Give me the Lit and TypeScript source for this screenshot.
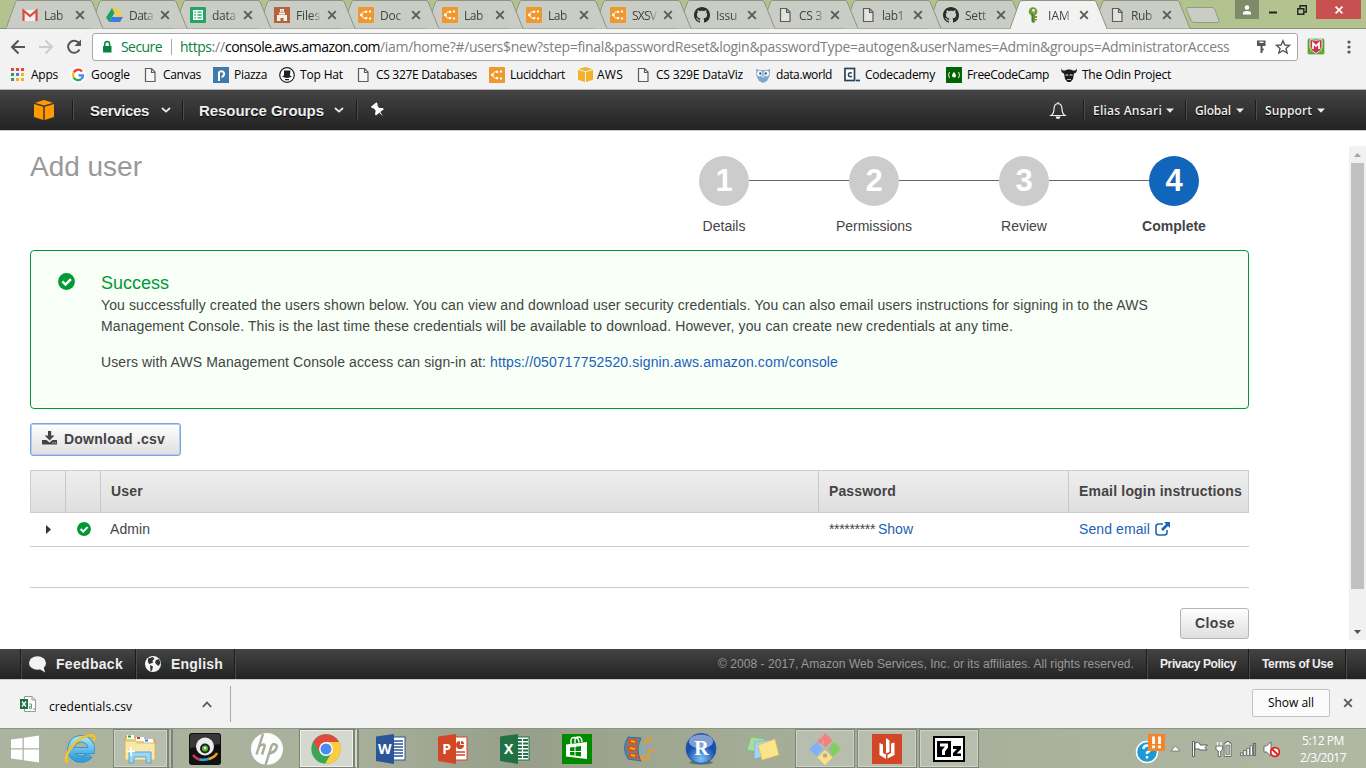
import { LitElement, html, svg, css } from "lit";
import { customElement, property } from "lit/decorators.js";

/** Text whose letter spacing is spread so that it fills a given width. */
@customElement("fit-text")
class FitText extends LitElement {
  @property({ type: Number }) w = 0;
  @property() text = "";
  static styles = css`
    :host { display: inline-block; white-space: pre; flex: none; }
    .inner { display: inline-block; }
  `;
  firstUpdated() {
    const el = this.renderRoot.querySelector(".inner") as HTMLElement;
    const natural = el.getBoundingClientRect().width;
    if (this.w && this.text.length) {
      el.style.letterSpacing = (this.w - natural) / this.text.length + "px";
      this.style.width = this.w + "px";
    }
  }
  render() {
    return html`<span class="inner">${this.text}</span>`;
  }
}

const fit = (text: string, w: number, cls = "") =>
  html`<fit-text class=${cls} .text=${text} .w=${w}></fit-text>`;

const icon = (w: number, h: number, body: unknown, vb = `0 0 ${w} ${h}`) =>
  html`<svg class="ic" width=${w} height=${h} viewBox=${vb}>${body}</svg>`;

const page = () => icon(16, 16, svg`<path d="M3.5 1.5h6l3.500 3.500v9.500h-9.500zM9.500 1.500v4h3.500" fill="#fafafa" fill-opacity=".5" stroke="#5c5c5c" stroke-width="1.200"/>`);
const lucid = () => icon(16, 16, svg`<rect width="16" height="16" rx="1" fill="#f0982c"/><path d="M7.500 4.800H5.500L3.500 8l2 3.200h2" fill="none" stroke="#fff" stroke-width=".9"/><circle cx="3.300" cy="8" r="1.400" fill="#fff"/><path d="M7 3.700h2.200v2.200H7zM7 10h2.200v2.200H7zM11 3.500h2v2h-2zM11 10.500h2v2h-2z" fill="#fff"/>`);
const github = () => icon(16, 16, svg`<path fill="#2c2e2b" d="M8 0C3.580 0 0 3.580 0 8c0 3.540 2.290 6.530 5.470 7.590.4.070.55-.17.55-.38 0-.19-.01-.82-.01-1.490-2.010.37-2.530-.49-2.690-.94-.09-.23-.48-.94-.82-1.130-.28-.15-.68-.52-.01-.53.63-.01 1.080.58 1.230.82.72 1.210 1.870.87 2.330.66.07-.52.28-.87.51-1.070-1.780-.2-3.640-.89-3.640-3.950 0-.87.31-1.590.82-2.150-.08-.2-.36-1.020.08-2.120 0 0 .67-.21 2.200.82.64-.18 1.320-.27 2-.27s1.360.09 2 .27c1.530-1.040 2.200-.82 2.200-.82.44 1.100.16 1.920.08 2.120.51.56.82 1.270.82 2.150 0 3.070-1.870 3.750-3.650 3.950.29.25.54.73.54 1.480 0 1.070-.01 1.930-.01 2.200 0 .21.15.46.55.38A8.010 8.010 0 0 0 16 8c0-4.420-3.580-8-8-8z"/>`);
const gmail = () => icon(16, 16, svg`<path d="M1 3h14v11H1z" fill="#efefef"/><path d="M1.500 14V3.500L8 9l6.500-5.500V14" fill="none" stroke="#d9493c" stroke-width="2.200"/>`);
const drive = () => icon(17, 16, svg`<path d="M6 1h5l6 9h-5.500z" fill="#f7cb3f"/><path d="M6 1 0 10.500 3 15l5.500-9z" fill="#1da261"/><path d="M3 15h11l3-5H6z" fill="#3e7be0"/>`);
const sheets = () => icon(16, 16, svg`<rect width="16" height="16" rx="1" fill="#23a566"/><path d="M3.700 3.700h8.600v8.600H3.700zM3.700 6.500h8.600M3.700 9.500h8.600M6.700 3.700v8.600" fill="none" stroke="#fff" stroke-width="1.400"/>`);
const files = () => icon(16, 16, svg`<rect width="16" height="16" fill="#b5623d"/><path d="M6 2h4v3H6zM5 5.500h6v2H5zM3 8h10v6h-3.500v-3h-3v3H3z" fill="#f8efe9"/><path d="M7.500 3h1v1.500h-1z" fill="#b5623d"/>`);
const iamKey = () => icon(16, 16, svg`<circle cx="7" cy="4.500" r="4.300" fill="#719b37"/><path d="M5.500 7h3.500v8l-2 1-1.500-1.500z" fill="#4f7528"/><path d="M9 9h2v2H9zM9 12h2v1.500H9z" fill="#719b37"/><circle cx="7.500" cy="3.500" r="1.400" fill="#eef3e2"/><path d="M8 4v12" stroke="#9cc060" stroke-width=".8"/>`);
const cube = (s: number, c = "#f90") => icon(s, s, svg`<path d="M10 0l9 2.700-9 2.800-9-2.800z" fill=${c}/><path d="M0 4l9.300 2.800V20L0 17z" fill=${c}/><path d="M20 4l-9.300 2.800V20L20 17z" fill=${c}/>`, "0 0 20 20");
const check = (s: number) => icon(s, s, svg`<circle cx="8.500" cy="8.500" r="8.400" fill="#093"/><path d="M4.300 8.400l3.200 3.200 5.400-5.400" fill="none" stroke="#fff" stroke-width="2.500"/>`, "0 0 17 17");
const cross = () => icon(10, 10, svg`<path d="M1.200 1.200l7.600 7.600M8.800 1.200L1.200 8.800" stroke="#5a5d57" stroke-width="1.900"/>`);
const caret = () => icon(8, 5, svg`<path d="M0 .5h8L4 4.700z" fill="#eee"/>`);
const chevron = () => icon(10, 6, svg`<path d="M1 1L5 4.600 9 1" fill="none" stroke="#eee" stroke-width="1.700"/>`);

// visible label, its width, icon
const TABS: [string, number, () => unknown][] = [
  ["Lab", 19, gmail], ["Data", 24, drive], ["data", 24, sheets], ["Files", 24, files], ["Doc", 21, lucid],
  ["Lab", 19, lucid], ["Lab", 19, lucid], ["SXSV", 24, lucid], ["Issu", 21, github], ["CS 3", 23, page],
  ["lab1", 22, page], ["Sett", 21, github], ["IAM", 22, iamKey], ["Rub", 21, page],
];

const google = () => icon(16, 16, svg`<circle cx="8" cy="8" r="8" fill="#fff"/><g fill="none" stroke-width="2.300"><path d="M12 4.500A5 5 0 0 0 3.700 5.500" stroke="#ea4335"/><path d="M3.700 5.500a5 5 0 0 0 0 5" stroke="#fbbc05"/><path d="M3.700 10.500A5 5 0 0 0 11.300 12" stroke="#34a853"/><path d="M11.300 12A5 5 0 0 0 13 8.300H8.500" stroke="#4285f4"/></g>`);
const piazza = () => icon(16, 16, svg`<rect width="16" height="16" fill="#3e7aab"/><path d="M6 14V5.500a2.800 2.800 0 1 1 2.500 4.300" fill="none" stroke="#fff" stroke-width="2"/>`);
const topHat = () => icon(16, 16, svg`<circle cx="8" cy="8" r="7.300" fill="#fff" stroke="#222" stroke-width="1.200"/><path d="M5 3.500h6.500l-.7 5 2 .8c-2 2.200-7.600 2.200-9.600 0L5 8.500zM6 12h4v1.300H6z" fill="#222"/>`);
const owl = () => icon(16, 16, svg`<path d="M1 2l3 1h8l3-1-.5 7L12 14l-4 2-4-2-2.500-5z" fill="#7ba6cf"/><circle cx="4.700" cy="6.500" r="3.200" fill="#fff" stroke="#7ba6cf" stroke-width=".8"/><circle cx="11.300" cy="6.500" r="3.200" fill="#fff" stroke="#7ba6cf" stroke-width=".8"/><circle cx="5.300" cy="6.500" r="1.200" fill="#3b5c7e"/><circle cx="10.700" cy="6.500" r="1.200" fill="#3b5c7e"/><path d="M7 9h2l-1 2z" fill="#fff"/>`);
const codec = () => icon(16, 16, svg`<rect x="1" y="1.500" width="9.500" height="12" fill="#fff" stroke="#24435b" stroke-width="1.700"/><path d="M7.800 6.300a2 2 0 1 0 0 2.800" fill="none" stroke="#24435b" stroke-width="1.500"/><path d="M12 13.500h4" stroke="#24435b" stroke-width="1.700"/>`);
const fcc = () => icon(16, 16, svg`<rect width="16" height="16" fill="#006400"/><path d="M3.500 5Q1.500 8 3.500 11M12.500 5Q14.500 8 12.500 11" fill="none" stroke="#fff" stroke-width=".9"/><path d="M8 4.500c.2 1.500 2 2.500 2 4 0 1.200-1 2-2 2s-2-.8-2-2C6 7 7.500 6 8 4.500z" fill="#fff"/>`);
const odin = () => icon(16, 16, svg`<path d="M0 1c.5 2.500 2 2.500 4 2.500 2-1.500 6-1.500 8 0 2 0 3.500 0 4-2.500.2 3.500-1 5-3 5.500L12 12l-2.500 3h-3L4 12l-1-5.500C1 6 0 4.500 0 1z" fill="#1b1b1b"/><path d="M4.500 7.500h2.800v1H4.500zM8.700 7.500h2.800v1H8.700zM6 12h4v.8H6z" fill="#f2f2f2"/>`);
const apps = () => icon(14, 14, svg`${["#e0483e", "#e0483e", "#e0483e", "#2f9e57", "#3f7de0", "#f0b31c", "#2f9e57", "#f0b31c", "#f0b31c"].map((c, i) => svg`<rect x=${(i % 3) * 5} y=${Math.floor(i / 3) * 5} width="3" height="3" fill=${c}/>`)}`);

// icon, label, icon start, label start, label width
const MARKS: [() => unknown, string, number, number, number][] = [
  [apps, "Apps", 11, 31, 27], [google, "Google", 70, 91, 39], [page, "Canvas", 142, 163, 38],
  [piazza, "Piazza", 213, 234, 33], [topHat, "Top Hat", 279, 300, 43],
  [page, "CS 327E Databases", 355, 376, 101], [lucid, "Lucidchart", 489, 510, 55],
  [() => cube(15, "#f2b127"), "AWS", 578, 598, 26], [page, "CS 329E DataViz", 636, 657, 87],
  [owl, "data.world", 756, 777, 56], [codec, "Codecademy", 845, 866, 70],
  [fcc, "FreeCodeCamp", 947, 968, 82], [odin, "The Odin Project", 1062, 1083, 89],
];

const office = (c: string, letter: string, sheet: unknown) => icon(32, 32, svg`<rect x="16" y="4" width="14" height="23" fill="#fff" stroke=${c}/>${sheet}<path d="M1 3.500L19 1v30L1 28z" fill=${c}/><text x="9.700" y="21" text-anchor="middle" class="glyph">${letter}</text>`);

const winLogo = () => icon(28, 28, svg`<path d="M0 4.500L11.500 3v10.300H0zM12.800 2.800L28 .5v12.800H12.800zM0 14.600h11.500V25L0 23.500zM12.800 14.600H28v12.900l-15.200-2.300z" fill="#fff"/>`);
const ie = () => icon(34, 32, svg`<defs><linearGradient id="ieg" x2="0" y2="1"><stop stop-color="#9de1fb"/><stop offset="1" stop-color="#2b9fe0"/></linearGradient></defs><path d="M25.500 22A10.300 10.300 0 1 1 27.300 17.500H10" fill="none" stroke="#2e86bf" stroke-width="7"/><path d="M25.500 22A10.300 10.300 0 1 1 27.300 17.500H10" fill="none" stroke="url(#ieg)" stroke-width="5.600"/><path d="M3.500 30C-1.500 25 8 9 20 4c9-3.500 12-1.500 9.500 4" fill="none" stroke="#f3c524" stroke-width="2.600"/>`);
const explorer = () => icon(32, 32, svg`<path d="M1 4h10l2 3h18v20H1z" fill="#e9cf7e" stroke="#c4a24e"/><path d="M3 2h7v4H3zM12 4h8v4h-8zM20 6h9v4h-9z" fill="#fff"/><path d="M4 2.500h3v2H4z" fill="#18a03a"/><path d="M13 4h3v2h-3z" fill="#d43a2a"/><path d="M21 6.500h3v2h-3z" fill="#2183d8"/><path d="M1 8h10l2 2h18v17H1z" fill="#f8e8ad" stroke="#d9bd6e"/><path d="M5 30V19h22v11h-5v-6H10v6z" fill="#9cd5f0" stroke="#58a6cf"/><path d="M7 14v9M3 18.500h8" stroke="#fff" stroke-width="1.500"/>`);
const cam = () => icon(32, 32, svg`<rect width="32" height="32" rx="3" fill="#111"/><path d="M1 3a2 2 0 0 1 2-2h26a2 2 0 0 1 2 2v8L1 15z" fill="#383838"/><circle cx="16" cy="13.500" r="9" fill="#ececec"/><circle cx="16" cy="15.500" r="5" fill="#222"/><circle cx="16" cy="15.500" r="3" fill="#56b83a"/><circle cx="16" cy="15" r="1.200" fill="#d8ffc8"/><path d="M4 22q3 4 8 5" fill="none" stroke="#c23a60" stroke-width="2.500"/><path d="M11 26.500q5 1 10-1" fill="none" stroke="#2ea5e4" stroke-width="2.500"/><path d="M20 26q6-2 8-6" fill="none" stroke="#f2a21c" stroke-width="2.500"/>`);
const hp = () => icon(32, 32, svg`<circle cx="16" cy="16" r="16" fill="#fdfdfd"/><path d="M12 1L5.500 21.500M8.500 13q6-3.500 5 1L11 21.500M21 11.500L14.500 32M21 11.500q6-1 4.500 3.500T18 20.500" fill="none" stroke="#a5ac99" stroke-width="2.400"/>`);
const chrome = () => icon(32, 32, svg`<circle cx="16" cy="16" r="14.700" fill="#3aa757"/><path d="M16 9h13A14.700 14.700 0 0 1 15 30.700L22 19z" fill="#fccd41"/><path d="M3.300 8.700L10 20l6-11h13A14.700 14.700 0 0 0 3.300 8.700z" fill="#dd4b3e"/><circle cx="16" cy="16" r="6.900" fill="#fff"/><circle cx="16" cy="16" r="5.500" fill="#4a8af4"/>`);
const word = () => office("#2a5699", "W", svg`<path d="M19 8h9M19 11h9M19 14h9M19 17h9M19 20h9M19 23h9" stroke="#2a5699" stroke-width="1.300"/>`);
const ppt = () => office("#d24726", "P", svg`<circle cx="23" cy="12" r="4" fill="#d24726"/><path d="M23 12V7h5v5z" fill="#fff"/><path d="M24 11V8a3 3 0 0 1 3 3z" fill="#d24726"/><path d="M19 19h9M19 22h9" stroke="#d24726" stroke-width="1.300"/>`);
const excel = () => office("#207245", "X", svg`<path d="M19 7h10M19 10.500h10M19 14h10M19 17.500h10M19 21h10M19 24h10" stroke="#207245" stroke-width="1.800"/><path d="M23.500 5v21" stroke="#fff" stroke-width="1.200"/>`);
const store = () => icon(30, 30, svg`<rect width="30" height="30" fill="#008a00"/><path d="M4 10.500L25 8v17L4 22.500z" fill="#fff"/><path d="M9 10V6.500Q9 3 13 3.500t4 5M13 9V6q0-3 3.500-3T20 8" fill="none" stroke="#fff" stroke-width="1.400"/><path d="M8 13.500l4.500-.5v4H8zM13.500 12.800l5.500-.8v5h-5.500zM8 18h4.500v3.500L8 21zM13.500 18H19v4.500l-5.500-.8z" fill="#008a00"/>`);
const movie = () => icon(32, 32, svg`<path d="M5 4q-7 11 0 22l13 2q-6-11 0-23z" fill="#4a87b8" stroke="#3a6d98"/><path d="M5.500 5.500l10 .5-1 5.500H4.500zM4 12.500h10v6H4zM4.500 20h10.500l1 6-10-1z" fill="#d45a17"/><path d="M8 8l4 1M7 15l5 1M8 22l4 1" stroke="#f7b733" stroke-width="1.700"/><path d="M29 5c-5 0-8 5-7 10s-4 6-4 9 6 4 7 0-1-8 6-6" fill="none" stroke="#e59b36" stroke-width="2.200"/><path d="M20 22V14h5" fill="none" stroke="#6fb0dc" stroke-width="3"/>`);
const rstudio = () => icon(32, 32, svg`<defs><radialGradient id="rg" cy=".85"><stop stop-color="#7dc3f8"/><stop offset="1" stop-color="#164fae"/></radialGradient></defs><ellipse cx="16" cy="29.500" rx="12" ry="2" fill="#6c7262"/><circle cx="16" cy="15.500" r="15" fill="url(#rg)" stroke="#2858a8"/><ellipse cx="16" cy="8.500" rx="12" ry="7" fill="#fff" fill-opacity=".45"/><text x="16.500" y="22" text-anchor="middle" class="serif">R</text>`);
const notes = () => icon(32, 32, svg`<path d="M4 4l14 2-3 14L0 17z" fill="#a8dc9a" stroke="#7bbb70" stroke-width=".6"/><path d="M8 9l14-2 2 15-17 4z" fill="#a4d3f4" stroke="#6fabd6" stroke-width=".6"/><path d="M11 12l17-6 4 16-17 5z" fill="#fbe58b" stroke="#dcbb4a" stroke-width=".7"/>`);
const git = () => icon(32, 32, svg`<path d="M16 0l7.500 7.500-7 7-3-3 2-2.500-3.500-3.500z" fill="#f48080"/><path d="M11 5l3.500 3.500-3 3L8 8z" fill="#f48080"/><path d="M7.500 9l6.500 7-6.500 7.500L0 16z" fill="#80b0fa"/><path d="M24.500 8.500L32 16l-7.500 7.500-3-3-2-5 2-3z" fill="#80d060"/><path d="M16 17l7.500 7.500L16 32l-7.500-7.500z" fill="#ffe080"/><circle cx="16" cy="22.500" r="2.300" fill="#a9af9c"/><circle cx="21" cy="16.500" r="1.900" fill="#a9af9c"/>`);
const uoffice = () => icon(30, 30, svg`<rect width="30" height="30" fill="#d24726"/><path d="M7.500 9l3.500 1.500V19l3 1.500V25l-6.500-4zM14 4l3.500 2.500V18L14 19.500zM19 9.500l3.500-1V21L15.500 24.500v-3.500l3.500-2z" fill="#fff"/>`);
const seven = () => icon(32, 26, svg`<rect x="1" y="1" width="30" height="24" fill="#fff" stroke="#000" stroke-width="2"/><path d="M4 5h14v16H4z"/><path d="M7 7.500h8v4l-3 4v3.500H9v-5l3-3.500H7z" fill="#fff"/><path d="M20 10h8v3l-4.500 4.500H28V20h-8v-3l4-4h-4z"/>`);

const TASKS: [() => unknown, string][] = [
  [ie, ""], [explorer, "open stacked dim"], [cam, ""], [hp, ""], [chrome, "open stacked"], [word, ""], [ppt, ""],
  [excel, ""], [store, ""], [movie, ""], [rstudio, ""], [notes, ""], [git, "open dim"], [uoffice, "open dim"], [seven, "open dim"],
];

@customElement("app-root")
class AppRoot extends LitElement {
  static styles = css`
    :host { display: flex; flex-direction: column; width: 1366px; height: 768px; overflow: hidden; background: #fff; font: 12px "Open Sans", "Noto Sans", sans-serif; color: #000; }
    * { box-sizing: border-box; }
    .ic { display: block; flex: none; overflow: visible; }
    .row { display: flex; align-items: center; }
    .grow { flex: 1; }

    .strip { height: 29px; flex: none; display: flex; background: #b3c390; border-bottom: 1px solid #878f76; padding-left: 6px; }
    .tab { position: relative; width: 84px; height: 29px; flex: none; display: flex; align-items: center; padding: 1px 0 0 16px; }
    .tab.slim { width: 83px; }
    .shape { position: absolute; left: 0; top: 0; }
    .tab .ic { position: relative; }
    .label { position: relative; width: 25px; flex: none; margin: 0 6px 0 6px; color: #42443f; -webkit-mask-image: linear-gradient(90deg, #000 65%, #0004 95%); mask-image: linear-gradient(90deg, #000 65%, #0004 95%); }
    .fill { fill: #cacdc5; stroke: #8f947f; }
    .active .fill { fill: #f2f2f2; }
    .newtab { padding: 7px 0 0 9px; width: 59px; flex: none; }
    .wins { display: flex; height: 19px; align-items: stretch; flex: none; }
    .person { width: 24px; background: #7f8a68; display: grid; place-items: center; }
    .min, .max { width: 28.500px; display: grid; place-items: center; }
    .shut { width: 45px; background: #c75050; display: grid; place-items: center; }

    .toolbar { height: 33px; flex: none; background: #f2f2f2; padding-left: 10px; }
    .navs { width: 82px; gap: 12px; }
    .omni { width: 1206px; height: 28px; margin-top: 3px; background: #fff; border: 1px solid #a8a8a8; border-radius: 3px; padding: 0 0 1px 9px; font-size: 14px; }
    .green { color: #0b8043; }
    .grey { color: #808080; }
    .bar { width: 1px; height: 16px; background: #aaa; margin: 0 8px 0 9px; }
    .marks { height: 28px; flex: none; background: #f2f2f2; border-bottom: 1px solid #b8b8b8; padding-bottom: 2px; }
    .mark { display: flex; align-items: center; }

    .aws { height: 41px; flex: none; background: linear-gradient(#444, #222); border-bottom: 1px solid #ccc; font: bold 15px "Liberation Sans", sans-serif; color: #eee; text-shadow: 0 1px 1px #000; }
    .sep { width: 2px; height: 20px; border-left: 1px solid #1b1b1b; border-right: 1px solid #4c4c4c; flex: none; }
    .sub { font: 600 12px "Open Sans", sans-serif; }

    .body { height: 518px; flex: none; display: flex; font: 14px "Liberation Sans", Arial, sans-serif; color: #444; }
    .main { width: 1219px; margin-left: 30px; }
    .top { height: 119px; display: flex; justify-content: space-between; }
    .title { font-size: 28px; line-height: 32px; color: #999; margin-top: 20px; }
    .steps { display: flex; margin: 25px 0 0; width: 600px; }
    .step { width: 150px; display: flex; flex-direction: column; align-items: center; }
    .railrow { display: flex; width: 150px; align-items: center; }
    .rail { flex: 1; height: 1px; background: #666; margin-bottom: 1px; }
    .rail.off { background: none; }
    .disc { width: 50px; height: 50px; border-radius: 50%; background: #ccc; color: #fff; font: bold 31px/50px "Liberation Sans", sans-serif; text-align: center; }
    .cur .disc { background: #1166bb; }
    .cur .name { font-weight: bold; }
    .name { margin-top: 11px; line-height: 18px; }
    .alert { height: 159px; border: 1px solid #093; border-radius: 4px; background: #f7fff7; display: flex; padding: 22px 0 0 27px; }
    .alert .copy { margin-left: 26px; line-height: 21px; }
    .head { font-size: 18px; color: #093; line-height: 20px; margin-bottom: 2px; }
    .line { height: 21px; display: flex; }
    .gap { height: 15px; }
    .link { color: #1c5fb8; }
    .btn { height: 31px; border: 1px solid #b5b5b5; border-radius: 3px; background: linear-gradient(#fff, #dedede); font-weight: bold; display: flex; align-items: center; padding-bottom: 2px; }
    .dl { width: 151px; height: 33px; margin-top: 14px; padding-left: 11px; border: 1px solid #7ea2e0; box-shadow: inset 0 0 0 1px #b3ccf5; }
    .dl fit-text { margin-left: 7px; }
    .dl .ic { margin-bottom: 2px; }
    .grid { display: grid; grid-template-columns: 35px 35px 718px 250px 181px; }
    .thead { height: 43px; margin-top: 14px; background: linear-gradient(#eee, #dfdfdf); border: 1px solid #ccc; font-weight: bold; }
    .thead div { border-left: 1px solid #c8c8c8; padding: 0 0 2px 10px; display: flex; align-items: center; }
    .thead div:first-child { border-left: 0; }
    .thead { grid-template-columns: 34px 35px 718px 250px 180px; }
    .tr { height: 34px; border-bottom: 1px solid #ccc; align-items: center; padding-bottom: 1px; }
    .tr .row { padding-left: 11px; }
    .tr .user { padding-left: 10px; }
    .empty { height: 41px; border-bottom: 1px solid #ccc; }
    .foot { display: flex; justify-content: flex-end; padding-top: 20px; }
    .close { width: 69px; padding-left: 14px; }
    .scroll { width: 17px; height: 494px; margin: 15px 0 0 100px; background: #f1f1f1; display: flex; flex-direction: column; align-items: center; }
    .thumb { width: 13px; height: 426px; background: #c1c1c1; }
    .arr { height: 17px; display: grid; place-items: center; }

    .footer { height: 31px; flex: none; background: linear-gradient(#444, #222); border-bottom: 1px solid #ccc; color: #eee; font: bold 14px "Liberation Sans", sans-serif; }
    .footer .sep { height: 30px; }
    .copyr { font-weight: normal; font-size: 12px; color: #999; }
    .small { font-size: 12px; }

    .shelf { height: 48px; flex: none; background: #f2f2f2; }
    .shelf .bar { height: 36px; margin: 0; }
    .file { margin-top: 4px; }
    .all { width: 78px; height: 28px; background: #fbfbfb; border: 1px solid #c2c2c2; border-radius: 2px; padding: 0 0 2px 15px; }
    .shelfend { margin-bottom: 2px; }

    .task { height: 40px; flex: none; background: linear-gradient(90deg, #acb39e, #a9b09c 25%, #979e89 38%, #a4ab96 55%, #abb29d 80%, #b0b7a2); border-top: 1px solid #8d947f; }
    .start { width: 50px; display: flex; justify-content: center; }
    .cell { width: 62px; height: 39px; display: flex; align-items: center; justify-content: center; }
    .frame { width: 60px; height: 39px; border: 1px solid #7e8474; box-shadow: inset 0 0 0 1px #ffffff90; background: #d5d8cf; display: flex; align-items: center; justify-content: center; }
    .dim .frame { background: #b8beae; box-shadow: inset 0 0 0 1px #ffffff50; }
    .stacked .frame { width: 60px; margin-right: 1px; border-right: 6px double #7e8474; }
    .glyph { font: bold 14px "Open Sans", sans-serif; fill: #fff; }
    .serif { font: bold 20px "Liberation Serif", serif; fill: #fff; }
    .clock { color: #fff; line-height: 17px; display: flex; flex-direction: column; align-items: center; width: 46px; margin-top: 1px; }
  `;

  tab([label, w, ic]: [string, number, () => unknown], i: number) {
    const active = label.startsWith("IAM");
    return html`<div class="tab ${active ? "active" : ""} ${i > 7 ? "slim" : ""}" style="z-index:${active ? 40 : 30 - i}">
      <svg class="shape" width="99" height="29"><path class="fill" d="M0 28.500L9.500 2Q10 .5 12 .5H84Q85.500.500 86.200 2L97 28.500" />${active ? svg`<path d="M1 28.500h95" stroke="#f2f2f2"/>` : ""}</svg>
      ${ic()}<div class="label">${fit(label, w)}</div>${cross()}
    </div>`;
  }

  marks() {
    let x = 0;
    return MARKS.map(([ic, label, ix, lx, w]) => {
      const lead = ix - x;
      const size = ic === apps ? 14 : 16;
      x = lx + w;
      return html`<div class="mark" style="padding-left:${lead}px;column-gap:${lx - ix - size}px">${ic()}${fit(label, w)}</div>`;
    });
  }

  step(n: number, name: string) {
    return html`<div class="step ${n === 4 ? "cur" : ""}">
      <div class="railrow"><div class="rail ${n === 1 ? "off" : ""}"></div><div class="disc">${n}</div><div class="rail ${n === 4 ? "off" : ""}"></div></div>
      <div class="name">${name}</div></div>`;
  }

  sp(w: number) {
    return html`<span style="flex:none;width:${w}px"></span>`;
  }

  render() {
    return html`
    <div class="strip">
      ${TABS.map((t, i) => this.tab(t, i))}
      <div class="newtab">${icon(34, 16, svg`<path d="M3 .5h24q2 0 3 2l4 11.500q.5 1.500-1.500 1.500H9q-2 0-2.800-2L1.500 2.500Q1 .5 3 .5z" fill="#cacdc5" stroke="#949a84"/>`)}</div>
      <div class="wins">
        <div class="person">${icon(10, 10, svg`<circle cx="5" cy="2.500" r="2.300" fill="#fff"/><path d="M1 9.500V8q0-2 4-2t4 2v1.500z" fill="#fff"/>`)}</div>
        <div class="min">${icon(8, 9, svg`<path d="M0 7.500h8" stroke="#222" stroke-width="2"/>`)}</div>
        <div class="max">${icon(10, 10, svg`<path d="M.8 3.800h6v5.500h-6zM3 3V.800h6.300V7H7" fill="none" stroke="#222" stroke-width="1.400"/>`)}</div>
        <div class="shut">${icon(8, 8, svg`<path d="M.6.6l6.800 6.800M7.400.6L.6 7.400" stroke="#fff" stroke-width="1.700"/>`)}</div>
      </div>
    </div>

    <div class="toolbar row">
      <div class="navs row">
        ${icon(16, 16, svg`<path d="M15 9H2.500M8.500 2.500L2 9l6.500 6.500" fill="none" stroke="#555" stroke-width="2"/>`)}
        ${icon(16, 16, svg`<path d="M1 9h12.500M7.500 2.500L14 9l-6.500 6.500" fill="none" stroke="#ccc" stroke-width="2"/>`)}
        ${icon(16, 16, svg`<path d="M13.500 11.500A6 6 0 1 1 12.800 5" fill="none" stroke="#555" stroke-width="2"/><path d="M15 1.500V8H8.500z" fill="#555"/>`)}
      </div>
      <div class="omni row">
        ${icon(10, 12, svg`<path d="M1 5h8.500v6.500H1z" fill="#0b8043"/><path d="M2.800 5V3a2.400 2.400 0 0 1 4.800 0v2" fill="none" stroke="#0b8043" stroke-width="1.500"/>`)}
        ${this.sp(9)}${fit("Secure", 41, "green")}
        <div class="bar"></div>
        ${fit("https", 31.5, "green")}${fit("://", 13.5, "grey")}${fit("console.aws.amazon.com", 155)}${fit("/iam/home?#/users$new?step=final&passwordReset&login&passwordType=autogen&userNames=Admin&groups=AdministratorAccess", 849.5, "grey")}
        ${this.sp(27)}
        ${icon(9, 13, svg`<path d="M0 .5h8.500v5.500H0z" fill="#555"/><path d="M2.500 2.300h4" stroke="#fff" stroke-width="1.400"/><path d="M4.500 5.500V13M4.500 9.500h2.200" fill="none" stroke="#555" stroke-width="2"/>`)}
        ${this.sp(10)}
        ${icon(14, 14, svg`<path d="M7 .8l1.900 4.200 4.600.4-3.500 3 1.100 4.600L7 10.500 2.900 13 4 8.400l-3.500-3L5.100 5z" fill="none" stroke="#555" stroke-width="1.400"/>`)}
      </div>
      ${this.sp(10)}
      ${icon(16, 16, svg`<rect y="1" width="16" height="15" rx="1" fill="#62b331" stroke="#3c8c2a" stroke-width=".6"/><path d="M2 1.500q6 1.500 12 0v7q0 4-6 7-6-3-6-7z" fill="#c8334d" stroke="#e8dfe0"/><path d="M5 11V5l3 3 3-3v6" fill="none" stroke="#fff" stroke-width="1.700"/>`)}
      ${this.sp(23)}
      ${icon(4, 14, svg`<circle cx="2" cy="3" r="1.600" fill="#555"/><circle cx="2" cy="8" r="1.600" fill="#555"/><circle cx="2" cy="13" r="1.600" fill="#555"/>`)}
    </div>
    <div class="marks row">${this.marks()}</div>

    <div class="aws row">
      ${this.sp(34)}${cube(20)}${this.sp(18)}<div class="sep"></div>${this.sp(16)}
      ${fit("Services", 59)}${this.sp(12)}${chevron()}${this.sp(11)}<div class="sep"></div>${this.sp(15)}
      ${fit("Resource Groups", 125)}${this.sp(10)}${chevron()}${this.sp(12)}<div class="sep"></div>${this.sp(13)}
      ${icon(14, 14, svg`<g transform="rotate(-38 7 7)"><path d="M3.500 0h7v2L9.300 3v3.200L12 8.500V10H2V8.500l2.700-2.300V3L3.500 2z" fill="#fff"/><path d="M6.300 10h1.400L7 15z" fill="#fff"/></g>`)}
      <div class="grow"></div>
      ${icon(16, 17, svg`<path d="M1 13.500q3-2 3-6.500 0-5 4-5.500 4 .5 4 5.500 0 4.500 3 6.500zM8 1.500V0" fill="none" stroke="#eee" stroke-width="1.200"/><path d="M5.500 14.500h5Q10 17 8 17t-2.500-2.500z" fill="#eee"/>`)}
      ${this.sp(17)}<div class="sep"></div>${this.sp(8)}
      ${fit("Elias Ansari", 69, "sub")}${this.sp(4)}${caret()}${this.sp(11)}<div class="sep"></div>${this.sp(8)}
      ${fit("Global", 36, "sub")}${this.sp(5)}${caret()}${this.sp(11)}<div class="sep"></div>${this.sp(8)}
      ${fit("Support", 47, "sub")}${this.sp(5)}${caret()}${this.sp(41)}
    </div>

    <div class="body">
      <div class="main">
        <div class="top">
          <div class="title">${fit("Add user", 112)}</div>
          <div class="steps">${["Details", "Permissions", "Review", "Complete"].map((s, i) => this.step(i + 1, s))}</div>
        </div>
        <div class="alert">${check(17)}
          <div class="copy">
            <div class="head">${fit("Success", 68)}</div>
            <div class="line">${fit("You successfully created the users shown below. You can view and download user security credentials. You can also email users instructions for signing in to the AWS", 1047)}</div>
            <div class="line">${fit("Management Console. This is the last time these credentials will be available to download. However, you can create new credentials at any time.", 912)}</div>
            <div class="gap"></div>
            <div class="line">${fit("Users with AWS Management Console access can sign-in at: ", 389)}${fit("https://050717752520.signin.aws.amazon.com/console", 348, "link")}</div>
          </div>
        </div>
        <div class="btn dl">${icon(15, 14, svg`<path d="M6 0h3.200v4.500h3.300L7.600 9.500 2.700 4.500H6z" fill="#444"/><path d="M0 9h4.500l3 2.500 3-2.500H15v4.500H0z" fill="#444"/><path d="M10.500 11.800h1M12.600 11.800h1" stroke="#eee"/>`)}${fit("Download .csv", 101)}</div>
        <div class="grid thead"><div></div><div></div><div>${fit("User", 32)}</div><div>${fit("Password", 67)}</div><div>${fit("Email login instructions", 163)}</div></div>
        <div class="grid tr">
          <div class="row">${this.sp(5)}${icon(5, 9, svg`<path d="M0 0v9l5-4.500z" fill="#333"/>`)}</div>
          <div class="row">${this.sp(1)}${check(14)}</div>
          <div class="row user">${fit("Admin", 40)}</div>
          <div class="row">${fit("*********", 46)}${this.sp(3)}${fit("Show", 35, "link")}</div>
          <div class="row">${fit("Send email", 71, "link")}${this.sp(5)}${icon(15, 14, svg`<path d="M8 2H3.500Q1 2 1 4.500v6Q1 13 3.500 13h6q2.500 0 2.500-2.500V8" fill="none" stroke="#1a66b8" stroke-width="1.600"/><path d="M9 0h6v6l-2-2-5 5-2-2 5-5z" fill="#1a66b8"/>`)}</div>
        </div>
        <div class="empty"></div>
        <div class="foot"><div class="btn close">${fit("Close", 40)}</div></div>
      </div>
      <div class="scroll">
        <div class="arr">${icon(7, 4, svg`<path d="M0 4h7L3.500 0z" fill="#a3a3a3"/>`)}</div>
        <div class="thumb"></div><div class="grow"></div>
        <div class="arr">${icon(7, 4, svg`<path d="M0 0h7L3.500 4z" fill="#505050"/>`)}</div>
      </div>
    </div>

    <div class="footer row">
      ${this.sp(20)}<div class="sep"></div>${this.sp(7)}
      ${icon(17, 17, svg`<ellipse cx="8.500" cy="7" rx="8.500" ry="6.800" fill="#f4f4f4"/><path d="M9 12l7 4.500-1.500-6z" fill="#f4f4f4"/>`)}
      ${this.sp(10)}${fit("Feedback", 67)}${this.sp(12)}<div class="sep"></div>${this.sp(8)}
      ${icon(16, 16, svg`<circle cx="8" cy="8" r="8" fill="#f4f4f4"/><path d="M3 2.500L8 1l1.500 2-2 1.500.5 2-2 1-2 .500-1-2zM11 4l3-1 1.500 4-2 3-2-1.500-1.500-2zM5 9l3 1.500-1 4-1.500.5z" fill="#333"/>`)}
      ${this.sp(10)}${fit("English", 52)}${this.sp(11)}<div class="sep"></div>
      <div class="grow"></div>
      ${fit("© 2008 - 2017, Amazon Web Services, Inc. or its affiliates. All rights reserved.", 416, "copyr")}${this.sp(12)}<div class="sep"></div>${this.sp(12)}
      ${fit("Privacy Policy", 76, "small")}${this.sp(12)}<div class="sep"></div>${this.sp(12)}
      ${fit("Terms of Use", 71, "small")}${this.sp(12)}<div class="sep"></div>${this.sp(19)}
    </div>

    <div class="shelf row">
      ${this.sp(20)}
      ${icon(16, 16, svg`<path d="M4.500.500h7.500l3.500 3.500v11.500h-11zM12 .5V4h3.500" fill="#fff" stroke="#999"/><path d="M0 3h8v10H0z" fill="#1f7244"/><path d="M2 5.500l4 5M6 5.500l-4 5" stroke="#fff" stroke-width="1.300"/><path d="M9 8h2.500v4.500H9.500v-2H11M14 12v2" stroke="#5fa37c" fill="none"/>`)}
      ${this.sp(13)}${fit("credentials.csv", 83, "file")}${this.sp(70)}
      ${icon(10, 7, svg`<path d="M.8 6L5 1.500 9.200 6" fill="none" stroke="#555" stroke-width="1.800"/>`)}
      ${this.sp(18)}<div class="bar"></div><div class="grow"></div>
      <div class="row shelfend"><div class="all row">${fit("Show all", 46)}</div>${this.sp(13)}${cross()}${this.sp(13)}</div>
    </div>

    <div class="task row">
      <div class="start">${winLogo()}</div>
      ${TASKS.map(([ic, c]) => html`<div class="cell ${c}">${c ? html`<div class="frame">${ic()}</div>` : ic()}</div>`)}
      <div class="grow"></div>
      ${icon(28, 28, svg`<circle cx="11" cy="17" r="10.500" fill="#1b9ad6" stroke="#fff" stroke-width="1.500"/><path d="M7.500 14q0-3.500 3.500-3.500T14.500 14q0 1.500-3.500 3.500v1.500M11 21v2.500" fill="none" stroke="#fff" stroke-width="2.400"/><rect x="12" y="-1" width="17" height="17" fill="#f58426"/><path d="M17.500 1.500v7.500M23.500 1.500v7.500M17.500 10.500v2.700M23.500 10.500v2.700" stroke="#fff" stroke-width="2.800"/>`)}
      ${this.sp(7)}
      ${icon(9, 5, svg`<path d="M0 5h9L4.500 0z" fill="#fff" stroke="#666" stroke-width=".7"/>`)}
      ${this.sp(12)}
      ${icon(16, 16, svg`<path d="M.5.500h2v15h-2z" fill="#fff" stroke="#555" stroke-width=".9"/><path d="M3 2q3-1.500 5 .5v1.500h7.500L13 6.500l2 2.500H8V8.500q-2-1.500-5 0z" fill="#fff" stroke="#555" stroke-width=".9"/>`)}
      ${this.sp(8)}
      ${icon(16, 16, svg`<path d="M8.200 2h2V.5h3V2h2v13.500h-7z" fill="#fff" stroke="#555" stroke-width=".8"/><path d="M9.800 4h3.800v9.800H9.800z" fill="#b0b7a2" stroke="#555" stroke-width=".6"/><path d="M1.500 1v4M5 1v4" stroke="#fff" stroke-width="1.300"/><path d="M0 5h6.500v3.500L4.700 10v5.500H2.300V10L0 8.500z" fill="#fff" stroke="#555" stroke-width=".8"/>`)}
      ${this.sp(8)}
      ${icon(16, 14, svg`${[0, 1, 2, 3, 4].map((i) => svg`<rect x=${i * 3.2 + 0.5} y=${11 - i * 2.4} width="2.400" height=${2.5 + i * 2.4} fill=${i === 4 ? "#a2a995" : "#fff"} stroke="#555" stroke-width=".7"/>`)}`)}
      ${this.sp(8)}
      ${icon(16, 16, svg`<path d="M0 5h2.500L7 1v14l-4.500-4H0z" fill="#fff" stroke="#555" stroke-width=".8"/><circle cx="11" cy="11" r="4.300" fill="#fff" stroke="#e02020" stroke-width="1.800"/><path d="M8 8l6 6" stroke="#e02020" stroke-width="1.800"/>`)}
      ${this.sp(20)}
      <div class="clock">${fit("5:12 PM", 42)}${fit("2/3/2017", 46)}</div>
      ${this.sp(20)}
    </div>`;
  }
}
